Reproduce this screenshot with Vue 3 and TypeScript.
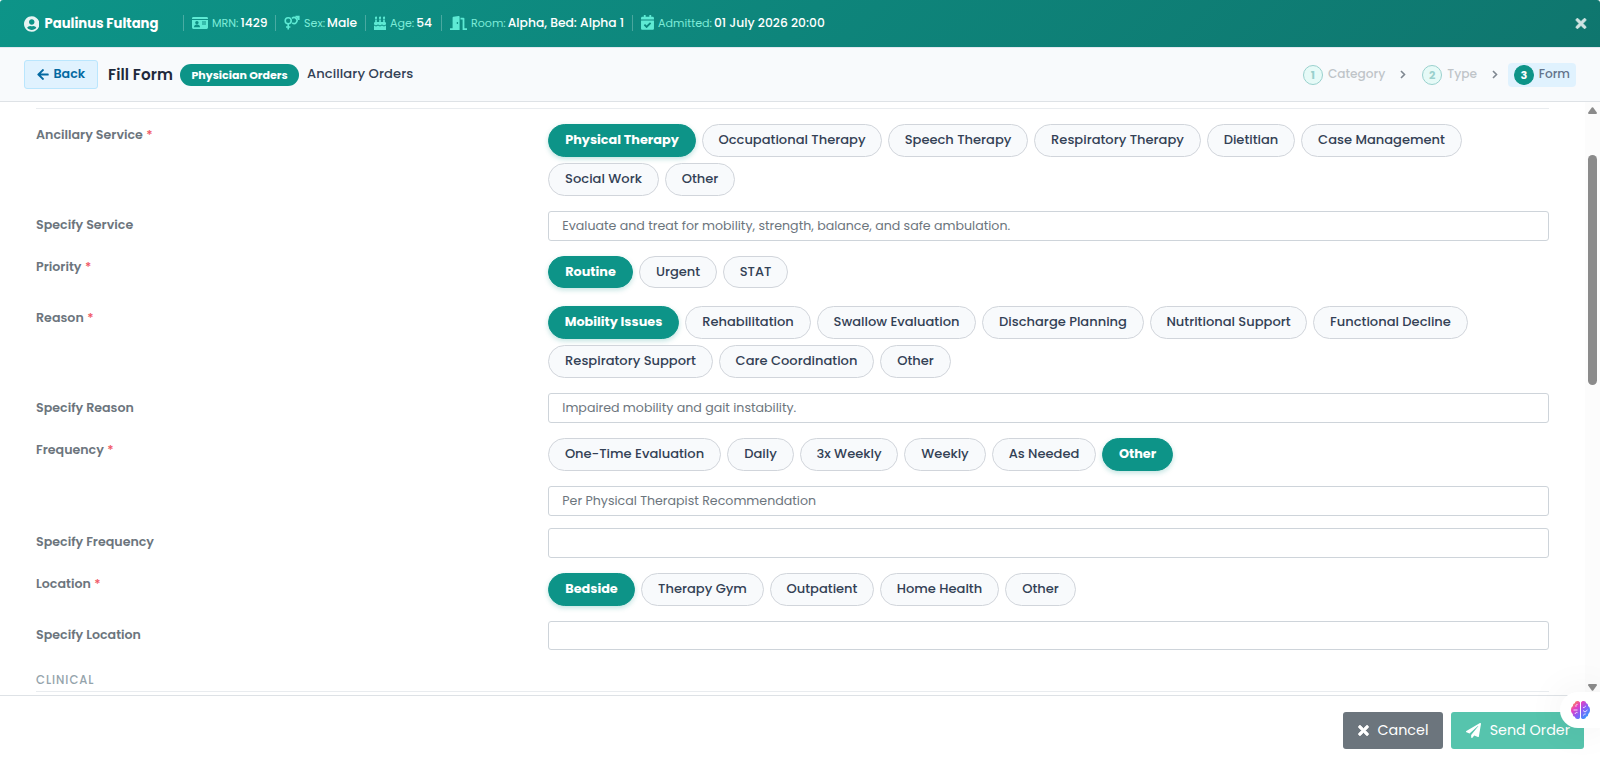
<script setup lang="ts">
interface Chip { text: string; w: number; on?: boolean }
interface Row {
  label: string
  required?: boolean
  lines?: Chip[][]
  short?: boolean
  low?: boolean
  input?: string
}

const c = (text: string, w: number, on = false): Chip => ({ text, w, on })

const facts = [
  { icon: 'card', label: 'MRN:', value: '1429', w: 92 },
  { icon: 'sex', label: 'Sex:', value: 'Male', w: 90 },
  { icon: 'cake', label: 'Age:', value: '54', w: 76 },
  { icon: 'door', label: 'Room:', value: 'Alpha, Bed: Alpha 1', w: 191 },
  { icon: 'cal', label: 'Admitted:', value: '01 July 2026 20:00', w: 200 },
]

const rows: Row[] = [
  {
    label: 'Ancillary Service', required: true,
    lines: [
      [c('Physical Therapy', 148, true), c('Occupational Therapy', 180), c('Speech Therapy', 140), c('Respiratory Therapy', 167), c('Dietitian', 88), c('Case Management', 161)],
      [c('Social Work', 111), c('Other', 70)],
    ],
  },
  { label: 'Specify Service', input: 'Evaluate and treat for mobility, strength, balance, and safe ambulation.' },
  { label: 'Priority', required: true, short: true, lines: [[c('Routine', 85, true), c('Urgent', 78), c('STAT', 65)]] },
  {
    label: 'Reason', required: true, low: true,
    lines: [
      [c('Mobility Issues', 131, true), c('Rehabilitation', 126), c('Swallow Evaluation', 159), c('Discharge Planning', 162), c('Nutritional Support', 157), c('Functional Decline', 155)],
      [c('Respiratory Support', 165), c('Care Coordination', 155), c('Other', 71)],
    ],
  },
  { label: 'Specify Reason', low: true, input: 'Impaired mobility and gait instability.' },
  {
    label: 'Frequency', required: true, low: true,
    lines: [[c('One-Time Evaluation', 173), c('Daily', 67), c('3x Weekly', 98), c('Weekly', 82), c('As Needed', 104), c('Other', 71, true)]],
    input: 'Per Physical Therapist Recommendation',
  },
  { label: 'Specify Frequency', input: '' },
  {
    label: 'Location', required: true,
    lines: [[c('Bedside', 87, true), c('Therapy Gym', 123), c('Outpatient', 104), c('Home Health', 119), c('Other', 71)]],
  },
  { label: 'Specify Location', short: true, input: '' },
]
</script>

<template>
  <div class="modal">
    <header class="patient">
      <svg class="user" viewBox="0 0 496 512"><path d="M248 8C111 8 0 119 0 256s111 248 248 248 248-111 248-248S385 8 248 8zm0 96c48.6 0 88 39.4 88 88s-39.4 88-88 88-88-39.4-88-88 39.4-88 88-88zm0 344c-58.7 0-111.3-26.6-146.5-68.2 18.8-35.4 55.6-59.8 98.5-59.8 2.4 0 4.8.4 7.1 1.1 13 4.2 26.6 6.9 40.9 6.9 14.3 0 28-2.7 40.9-6.9 2.3-.7 4.7-1.1 7.1-1.1 42.9 0 79.7 24.4 98.5 59.8C359.3 421.4 306.7 448 248 448z" /></svg>
      <div class="name">Paulinus Fultang</div>
      <div v-for="f in facts" :key="f.icon" class="fact" :style="{ width: f.w + 'px' }">
        <svg v-if="f.icon === 'card'" class="fi" width="16" height="14" viewBox="0 0 16 14"><path fill-rule="evenodd" d="M1.4 1h13.2A1.4 1.4 0 0 1 16 2.4V3H0v-.6A1.4 1.4 0 0 1 1.4 1zM0 4h16v7.6a1.4 1.4 0 0 1-1.4 1.4H1.4A1.4 1.4 0 0 1 0 11.600zM4.900 5a1.700 1.700 0 1 0 .01 0zM2 11.200h6c0-1.500-.8-2.400-1.800-2.400H3.800C2.800 8.800 2 9.700 2 11.200zM10 5.500v1h4v-1zM10 7.500v1h4v-1z" /></svg>
        <svg v-else-if="f.icon === 'sex'" class="fi line" width="16" height="16" viewBox="0 0 16 16"><circle cx="4.200" cy="5.700" r="3" /><path d="M4.200 9v5.500M2 12h4.400M8 3.300a3 3 0 1 1 .2 4.600M12.300 4 14.700 1.700M11.500 1.500h3.300V5" /></svg>
        <svg v-else-if="f.icon === 'cake'" class="fi" width="12" height="14" viewBox="0 0 12 14"><path d="M2 0c.9 1 1.100 1.300 1.100 1.900S2.600 3 2 3 .9 2.600.9 1.900C.9 1.300 1.600 1 2 0zM6 0c.9 1 1.100 1.300 1.100 1.900S6.600 3 6 3s-1.100-.4-1.100-1.100C4.900 1.300 5.600 1 6 0zM10 0c.9 1 1.100 1.300 1.100 1.900S10.600 3 10 3s-1.100-.4-1.100-1.100C8.900 1.300 9.600 1 10 0zM1.200 3.500h1.600V6h2.400V3.500h1.600V6h2.400V3.500h1.600V6c.7 0 1.200.6 1.200 1.300v1.200c-1.200 0-1.200.9-2 .9s-1-.9-2-.9-1.200.9-2 .9-1-.9-2-.9-1.200.9-2 .9-1-.9-2-.9V7.300C0 6.600.5 6 1.200 6zM0 9.600c1 0 1 .9 2 .9s1.200-.9 2-.9 1.200.9 2 .9 1.200-.9 2-.9 1.200.9 2 .9 1-.9 2-.9V14H0z" /></svg>
        <svg v-else-if="f.icon === 'door'" class="fi" width="17" height="14" viewBox="0 0 17 14"><path fill-rule="evenodd" d="M0 12.200h2.600V1.800c0-.5.400-.9.800-1L8.600 0c.6-.1 1 .3 1 .9V14H0zM7.400 6.100c-.4 0-.8.400-.8.900s.4.900.8.900.8-.4.8-.9-.4-.9-.8-.9zM10.500 1.700h3c.5 0 .9.400.9.900v9.600H17V14h-4.400V3.500h-2.100z" /></svg>
        <svg v-else class="fi" width="13" height="14.800" viewBox="0 0 448 512"><path d="M436 160H12c-6.627 0-12-5.373-12-12v-36c0-26.510 21.490-48 48-48h48V12c0-6.627 5.373-12 12-12h40c6.627 0 12 5.373 12 12v52h128V12c0-6.627 5.373-12 12-12h40c6.627 0 12 5.373 12 12v52h48c26.510 0 48 21.490 48 48v36c0 6.627-5.373 12-12 12zM12 192h424c6.627 0 12 5.373 12 12v260c0 26.510-21.490 48-48 48H48c-26.510 0-48-21.490-48-48V204c0-6.627 5.373-12 12-12zm333.296 95.947l-28.169-28.398c-4.667-4.705-12.265-4.736-16.970-.068L194.120 364.665l-45.980-46.352c-4.667-4.705-12.266-4.736-16.971-.068l-28.397 28.170c-4.705 4.667-4.736 12.265-.068 16.970l82.601 83.269c4.667 4.705 12.265 4.736 16.970.068l142.953-141.805c4.705-4.667 4.736-12.265.068-16.970z" /></svg>
        <div class="fl">{{ f.label }}</div>
        <div class="fv">{{ f.value }}</div>
      </div>
      <svg class="close" viewBox="-12 -12 376 376"><path d="M242.720 176l100.070-100.070c12.280-12.280 12.280-32.190 0-44.480l-22.240-22.240c-12.280-12.280-32.190-12.280-44.480 0L176 109.280 75.930 9.210c-12.280-12.280-32.190-12.280-44.480 0L9.210 31.450c-12.280 12.280-12.280 32.190 0 44.480L109.280 176 9.210 276.070c-12.280 12.280-12.280 32.190 0 44.480l22.240 22.240c12.280 12.280 32.200 12.280 44.480 0L176 242.720l100.070 100.070c12.280 12.280 32.200 12.280 44.480 0l22.240-22.240c12.280-12.280 12.280-32.190 0-44.480L242.720 176z" /></svg>
    </header>

    <nav class="bar">
      <button class="back">
        <svg width="12" height="13" viewBox="0 0 448 512"><path d="M257.500 445.100l-22.200 22.200c-9.400 9.400-24.600 9.400-33.900 0L7 273c-9.400-9.400-9.400-24.600 0-33.900L201.400 44.700c9.400-9.400 24.600-9.400 33.900 0l22.200 22.200c9.500 9.500 9.300 25-.4 34.300L136.600 216H424c13.300 0 24 10.700 24 24v32c0 13.300-10.700 24-24 24H136.600l120.500 114.800c9.800 9.300 10 24.800.4 34.300z" /></svg>
        <span>Back</span>
      </button>
      <div class="title">Fill Form</div>
      <div class="badge">Physician Orders</div>
      <div class="sub">Ancillary Orders</div>
      <div class="steps">
        <div class="step done"><i>1</i><span>Category</span></div>
        <svg class="chev" viewBox="0 0 6 9"><path d="M1 1l3.500 3.500L1 8" /></svg>
        <div class="step done"><i>2</i><span>Type</span></div>
        <svg class="chev" viewBox="0 0 6 9"><path d="M1 1l3.500 3.500L1 8" /></svg>
        <div class="step now"><i>3</i><span>Form</span></div>
      </div>
    </nav>

    <main class="body">
      <div class="form">
        <div v-for="r in rows" :key="r.label" class="row">
          <div class="label" :class="{ low: r.low }">{{ r.label }}<b v-if="r.required">*</b></div>
          <div class="field" :class="{ short: r.short }">
            <div v-if="r.lines" class="chips">
              <div v-for="(line, i) in r.lines" :key="i" class="line-of">
                <div v-for="chip in line" :key="chip.text" class="chip" :class="{ on: chip.on }" :style="{ width: chip.w + 'px' }">{{ chip.text }}</div>
              </div>
            </div>
            <div v-if="r.input !== undefined" class="input">{{ r.input }}</div>
          </div>
        </div>
        <div class="section">CLINICAL</div>
      </div>
      <div class="scroll">
        <svg width="9" height="7" viewBox="0 0 9 7"><path d="M3.800.6Q4.500-.3 5.200.6L8.800 5.600Q9.200 7 8 7H1Q-.2 7 .2 5.600z" /></svg>
        <div class="thumb"></div>
        <svg class="down" width="9" height="7" viewBox="0 0 9 7"><path d="M3.800 6.400Q4.500 7.300 5.200 6.400L8.800 1.400Q9.200 0 8 0H1Q-.2 0 .2 1.400z" /></svg>
      </div>
    </main>

    <footer class="foot">
      <button class="btn cancel">
        <svg class="x" width="11" height="11" viewBox="-12 -12 376 376"><path d="M242.720 176l100.070-100.070c12.280-12.280 12.280-32.190 0-44.480l-22.240-22.240c-12.280-12.280-32.190-12.280-44.480 0L176 109.280 75.930 9.210c-12.280-12.280-32.190-12.280-44.480 0L9.210 31.450c-12.280 12.280-12.280 32.190 0 44.480L109.280 176 9.210 276.070c-12.280 12.280-12.280 32.190 0 44.480l22.240 22.240c12.280 12.280 32.200 12.280 44.480 0L176 242.720l100.070 100.070c12.280 12.280 32.200 12.280 44.480 0l22.240-22.240c12.280-12.280 12.280-32.190 0-44.480L242.720 176z" /></svg>
        <span>Cancel</span>
      </button>
      <button class="btn send">
        <svg width="15" height="15" viewBox="0 0 512 512"><path d="M476 3.200L12.500 270.600c-18.100 10.400-15.800 35.600 2.200 43.200L121 358.400l287.300-253.200c5.500-4.900 13.300 2.600 8.600 8.300L176 407v80.500c0 23.600 28.500 32.900 42.500 15.800L282 426l124.600 52.200c14.200 6 30.400-2.900 33-18.200l72-432C515 7.800 493.300-6.800 476 3.200z" /></svg>
        <span>Send Order</span>
      </button>
    </footer>

    <div class="assistant">
      <svg width="19" height="18" viewBox="0 0 19 18">
        <defs>
          <linearGradient id="lobes" x1="2" y1="0" x2="17" y2="16" gradientUnits="userSpaceOnUse">
            <stop offset="0" stop-color="#ff9a3d" /><stop offset=".3" stop-color="#e83fc0" /><stop offset=".6" stop-color="#8b5cf6" /><stop offset="1" stop-color="#2f9bff" />
          </linearGradient>
        </defs>
        <path fill="url(#lobes)" d="M9 1.600C8.700.5 7.600 0 6.500 0 5 0 4 .9 3.900 2.200 2.500 2.400 1.700 3.600 2 5 .6 5.700 0 7.200 0 9s.6 3.200 1.800 3.900c-.2 1.500.7 2.700 2.100 2.900C4.200 17.200 5.200 18 6.500 18c1.100 0 2.200-.5 2.500-1.600zM10 1.600C10.300.5 11.400 0 12.500 0c1.500 0 2.500.9 2.600 2.200 1.400.2 2.200 1.400 1.900 2.800 1.400.7 2 2.200 2 4s-.6 3.200-1.800 3.900c.2 1.500-.7 2.700-2.100 2.900-.3 1.400-1.300 2.200-2.600 2.200-1.100 0-2.200-.5-2.500-1.600z" />
        <path class="fold" d="M2.500 9h4M6.500 3.500C5 3.500 4.500 4.500 5 5.800M4 13c.4-1.500 1.500-1.800 2.500-1.300M12 6.500c1.300.3 2.400-.4 2.500-1.700M12 9.500l2 1.500 2.500-2M12.500 14.500c.2-1.200 1-1.700 2.200-1.500" />
      </svg>
    </div>
  </div>
</template>

<style>
html, body { margin: 0; overflow: hidden; background: #fff; }
</style>

<style scoped>
.modal {
  position: relative;
  display: flex;
  flex-direction: column;
  width: 1600px;
  height: 765px;
  overflow: hidden;
  background: #fff;
  font-family: Poppins, Inter, "Open Sans", sans-serif;
  font-size: 13px;
  white-space: nowrap;
}
.modal * { box-sizing: border-box; }
svg { display: block; flex: none; fill: currentColor; }
button { font: inherit; }

.patient {
  flex: none;
  display: flex;
  align-items: center;
  height: 47px;
  padding: 0 13px 1px 23.500px;
  border-radius: 3px 3px 0 0;
  background: linear-gradient(135deg, #0d9488, #0f766e);
  color: #fff;
}
.user { width: 15.500px; height: 16px; margin-right: 5.500px; opacity: .9; margin-top: 1px; }
.name { width: 138.500px; font-size: 13.200px; font-weight: 700; margin-top: 1px; }
.fact {
  flex: none;
  display: flex;
  align-items: center;
  height: 16px;
  padding-left: 7.500px;
  border-left: 1px solid rgba(255, 255, 255, .25);
}
.fi { color: #5eead4; margin-top: -1px; }
.fi.line { fill: none; stroke: currentColor; stroke-width: 1.600; }
.fl { margin-left: 4.500px; color: #7debd8; font-size: 11.100px; margin-top: 1px; }
.fv { margin-left: 2px; font-size: 12.300px; font-weight: 500; }
.close { width: 12px; height: 11px; margin-left: auto; opacity: .8; }
.close, .x { stroke: currentColor; stroke-width: 24; }

.bar {
  flex: none;
  display: flex;
  align-items: center;
  height: 55px;
  padding: 0 24px;
  border-top: 1px solid #e2e8f0;
  border-bottom: 1px solid #dee2e6;
  background: #f8fafc;
}
.back {
  display: flex;
  align-items: center;
  gap: 4.500px;
  width: 74px;
  height: 29px;
  padding: 0 0 1px 12px;
  border: 1px solid #bae6fd;
  border-radius: 3px;
  background: #e0f2fe;
  color: #0369a1;
  font-size: 12.640px;
  font-weight: 600;
}
.title { width: 71px; margin: -1px 0 0 10px; color: #1e293b; font-size: 15.200px; font-weight: 600; letter-spacing: .1px; }
.badge {
  width: 119px;
  height: 22px;
  margin-left: 1px;
  border-radius: 11px;
  background: #0d9488;
  color: #fff;
  font-size: 11px;
  font-weight: 700;
  line-height: 22px;
  text-align: center;
}
.sub { margin: -1px 0 0 8px; color: #334155; font-size: 13.100px; font-weight: 500; letter-spacing: .08px; }
.steps { display: flex; align-items: center; margin-left: auto; }
.step { display: flex; align-items: center; height: 24px; padding: 0 6px; color: #6c757d; font-size: 12.160px; font-weight: 500; }
.step span { margin-top: -1px; }
.step i {
  width: 20px;
  height: 20px;
  margin-right: 5px;
  border: 1px solid #0d9488;
  border-radius: 50%;
  background: #ccfbf1;
  color: #0d9488;
  font-size: 11.200px;
  font-style: normal;
  font-weight: 700;
  line-height: 18px;
  text-align: center;
}
.step.done { opacity: .4; }
.step.now { width: 68px; border-radius: 4px; background: #e0f2fe; color: #64748b; }
.step.now i { background: #0d9488; color: #fff; }
.chev { width: 6px; height: 9px; margin: 0 10px 0 9px; fill: none; stroke: #7f8790; stroke-width: 1.600; }

.body { flex: 1; min-height: 0; display: flex; overflow: hidden; }
.form { flex: 1; padding: 6px 36px 0; }
.form::before { content: ""; display: block; height: 1px; margin-bottom: 12px; background: #e9ecef; }
.row { display: flex; margin-bottom: 12px; }
.label { width: 512px; height: 27px; color: #6c757d; font-size: 12.640px; font-weight: 600; line-height: 27px; }
.label.low { padding-top: 1px; }
.label b { margin-left: 3.500px; color: #f05563; font-weight: 500; }
.field { width: 1001px; display: flex; flex-direction: column; gap: 12px; }
.chips { display: flex; flex-direction: column; gap: 6px; padding: 3px 0; }
.line-of { display: flex; gap: 6px; }
.chip {
  flex: none;
  height: 33px;
  border: 1px solid #d1d5db;
  border-radius: 17px;
  background: #f8fafc;
  color: #334155;
  font-size: 13.050px;
  font-weight: 500;
  line-height: 30px;
  text-align: center;
}
.chip.on {
  border-color: #0d9488;
  background: #0d9488;
  color: #fff;
  font-size: 12.800px;
  font-weight: 700;
  box-shadow: 0 2px 5px rgba(13, 148, 136, .25);
}
.short .chip { height: 32px; }
.input {
  height: 30px;
  padding-left: 13.300px;
  border: 1px solid #ced4da;
  border-radius: 3px;
  color: #6c757d;
  font-size: 12.600px;
  line-height: 28px;
}
.short .input { height: 29px; }
.section {
  height: 30px;
  padding-top: 9px;
  border-bottom: 1px solid #e9ecef;
  color: #94a3ab;
  font-size: 11.600px;
  font-weight: 500;
  letter-spacing: .960px;
  line-height: 18px;
}

.scroll {
  flex: none;
  display: flex;
  flex-direction: column;
  width: 15px;
  padding: 5px 3px 4px;
  background: #fcfcfc;
  color: #8b8b8b;
}
.thumb { height: 230px; margin-top: 41px; border-radius: 5px; background: #8b8b8b; }
.down { margin-top: auto; }

.foot {
  flex: none;
  display: flex;
  justify-content: flex-end;
  gap: 8px;
  height: 70px;
  padding: 16px 16px 0;
  border-top: 1px solid #dee2e6;
}
.btn {
  display: flex;
  align-items: center;
  height: 37px;
  padding: 0 0 0 15px;
  border: 0;
  border-radius: 3px;
  color: #fff;
  font-size: 14.300px;
}
.cancel { width: 100px; gap: 8.500px; background: #6c757d; }
.send { width: 133px; gap: 8.700px; background: #56c4ad; }

.assistant {
  position: absolute;
  right: 0;
  top: 692px;
  display: flex;
  align-items: center;
  width: 40px;
  height: 36px;
  padding-left: 10.500px;
  border-radius: 18px 0 0 18px;
  background: #fff;
  box-shadow: 0 0 40px rgba(0, 0, 0, .07);
}
.fold { fill: none; stroke: #f3e8ff; stroke-width: .9; }
</style>
